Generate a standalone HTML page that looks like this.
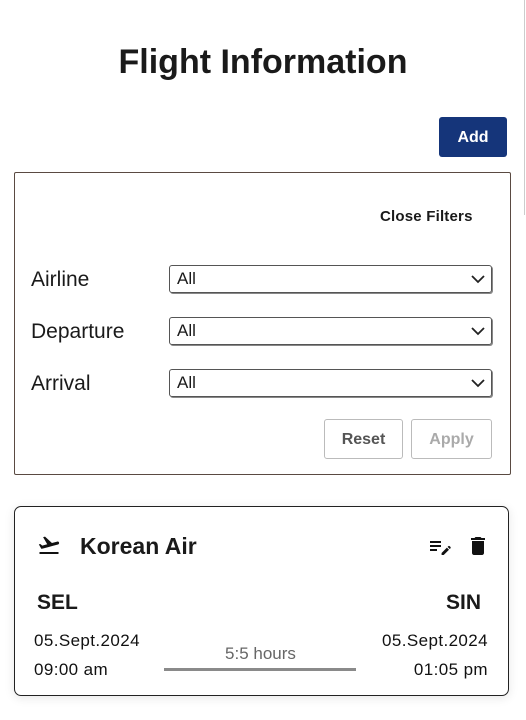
<!DOCTYPE html>
<html><head><meta charset="utf-8"><style>
*{box-sizing:border-box;margin:0;padding:0}
body{width:526px;height:720px;background:#fff;font-family:"Liberation Sans",sans-serif;color:#1a1a1a;position:relative;overflow:hidden}
.abs{position:absolute}
h1{position:absolute;left:0;width:526px;top:43px;text-align:center;font-size:34px;font-weight:bold;color:#1a1a1a}
.add{left:439px;top:117px;width:68px;height:40px;background:#15357a;border-radius:3px;color:#fff;font-weight:bold;font-size:16px;text-align:center;line-height:42px}
.filter{left:14px;top:172px;width:497px;height:303px;border:1.5px solid #5a4a42;border-radius:2px}
.lbl{font-size:21px;left:31px}
.sel{left:169px;width:323px;height:28px;border:1px solid #555;border-radius:3px;box-shadow:1px 1px 0 #888;font-size:17px;padding-left:7px;line-height:26px}
.sel svg{position:absolute;right:6px;top:9px}
.btn{top:419px;height:40px;border:1.5px solid #bbb;border-radius:3px;text-align:center;line-height:40px;font-weight:bold;font-size:16px}
.card{left:14px;top:506px;width:495px;height:190px;border:1.5px solid #222;border-radius:7px;box-shadow:0 2px 10px rgba(0,0,0,.1)}
.b{font-weight:bold}
.d{font-size:17px;letter-spacing:0.4px;color:#111}
</style></head><body>
<div class="abs" style="left:524px;top:0;width:1px;height:215px;background:#ccc"></div>
<h1>Flight Information</h1>
<div class="abs add">Add</div>
<div class="abs filter"></div>
<div class="abs b" style="left:380px;top:208px;font-size:15px;letter-spacing:0.2px">Close Filters</div>
<div class="abs lbl" style="top:268px">Airline</div>
<div class="abs lbl" style="top:320px">Departure</div>
<div class="abs lbl" style="top:372px">Arrival</div>
<div class="abs sel" style="top:265px">All<svg width="14" height="9"><path d="M1 1l6 6 6-6" stroke="#222" stroke-width="1.8" fill="none"/></svg></div>
<div class="abs sel" style="top:317px">All<svg width="14" height="9"><path d="M1 1l6 6 6-6" stroke="#222" stroke-width="1.8" fill="none"/></svg></div>
<div class="abs sel" style="top:369px">All<svg width="14" height="9"><path d="M1 1l6 6 6-6" stroke="#222" stroke-width="1.8" fill="none"/></svg></div>
<div class="abs btn" style="left:324px;width:79px;color:#555">Reset</div>
<div class="abs btn" style="left:411px;width:81px;color:#aaa">Apply</div>
<div class="abs card"></div>
<svg class="abs" style="left:36px;top:533px" width="26" height="24" viewBox="0 0 24 24"><path d="M2.5 19h19v2h-19z M22.07 9.64c-.21-.8-1.04-1.28-1.84-1.06L14.92 10l-6.9-6.43-1.93.51 4.14 7.17-4.97 1.33-1.97-1.54-1.45.39 1.82 3.16.77 1.33 1.6-.43 5.31-1.42 4.35-1.16L21 11.49c.81-.23 1.28-1.05 1.07-1.85z" fill="#111"/></svg>
<div class="abs b" style="left:80px;top:533px;font-size:23px">Korean Air</div>
<svg class="abs" style="left:426px;top:535px" width="26" height="24" viewBox="0 0 24 24"><path d="M3 10h11v2H3zm0-4h11v2H3zm0 8h7v2H3zm17.59-2.07.71-.71c.39-.39 1.02-.39 1.41 0l.71.71c.39.39.39 1.02 0 1.41l-.71.71-2.12-2.12zm-.71.71-5.3 5.3V20h2.12l5.3-5.3-2.12-2.12z" fill="#111"/></svg>
<svg class="abs" style="left:466px;top:533px" width="24" height="26" viewBox="0 0 24 24"><path d="M6 19c0 1.1.9 2 2 2h8c1.1 0 2-.9 2-2V7H6v12zM19 4h-3.5l-1-1h-5l-1 1H5v2h14V4z" fill="#111"/></svg>
<div class="abs b" style="left:37px;top:591px;font-size:21px">SEL</div>
<div class="abs b" style="left:446px;top:591px;font-size:21px">SIN</div>
<div class="abs d" style="left:34px;top:631px">05.Sept.2024</div>
<div class="abs d" style="left:34px;top:660px">09:00 am</div>
<div class="abs d" style="right:38px;top:631px;text-align:right">05.Sept.2024</div>
<div class="abs d" style="right:38px;top:660px;text-align:right">01:05 pm</div>
<div class="abs" style="left:163px;width:195px;text-align:center;top:644px;font-size:17px;color:#666">5:5 hours</div>
<div class="abs" style="left:164px;top:668px;width:192px;height:3px;background:#8a8a8a"></div>
</body></html>
